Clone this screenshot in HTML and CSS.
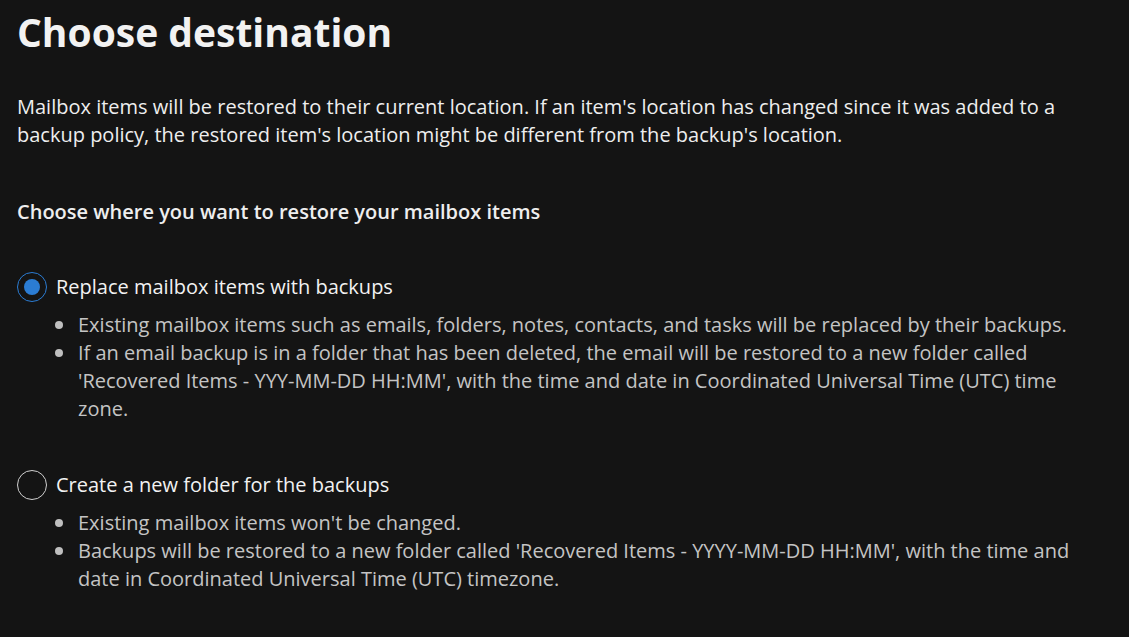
FILE: index.html
```html
<!DOCTYPE html>
<html lang="en">
<head>
<meta charset="utf-8">
<title>Choose destination</title>
<link rel="stylesheet" href="styles.css">
</head>
<body>
<main class="page">
  <h1 class="title">Choose destination</h1>
  <p class="intro">Mailbox items will be restored to their current location. If an item's location has changed since it was added to a backup policy, the restored item's location might be different from the backup's location.</p>
  <h2 class="subtitle">Choose where you want to restore your mailbox items</h2>

  <section class="option option-first">
    <label class="radio-row">
      <span class="radio radio-checked"><span class="radio-dot"></span></span>
      <span class="radio-label">Replace mailbox items with backups</span>
    </label>
    <ul class="notes">
      <li><span>Existing mailbox items such as emails, folders, notes, contacts, and tasks will be replaced by their backups.</span></li>
      <li><span>If an email backup is in a folder that has been deleted, the email will be restored to a new folder called 'Recovered Items - YYY-MM-DD HH:MM', with the time and date in Coordinated Universal Time (UTC) time zone.</span></li>
    </ul>
  </section>

  <section class="option option-second">
    <label class="radio-row">
      <span class="radio"></span>
      <span class="radio-label">Create a new folder for the backups</span>
    </label>
    <ul class="notes">
      <li><span>Existing mailbox items won't be changed.</span></li>
      <li><span>Backups will be restored to a new folder called 'Recovered Items - YYYY-MM-DD HH:MM', with the time and date in Coordinated Universal Time (UTC) timezone.</span></li>
    </ul>
  </section>
</main>
</body>
</html>
```

FILE: styles.css
```css
html, body {
  margin: 0;
  padding: 0;
  background: #141414;
}

body {
  font-family: "Open Sans", "Noto Sans", "Liberation Sans", sans-serif;
  color: #eeeeee;
  font-size: 20px;
  line-height: 28px;
}

.page {
  padding: 0 17px;
  width: 1080px;
}

.title {
  margin: 0;
  padding-top: 4px;
  font-size: 39px;
  line-height: 56px;
  font-weight: 700;
  color: #f2f2f2;
}

.intro {
  margin: 33px 0 0;
}

.subtitle {
  margin: 49px 0 0;
  font-size: 20px;
  line-height: 28px;
  font-weight: 600;
}

.option-first {
  margin-top: 46px;
}

.option-second {
  margin-top: 47px;
}

.radio-row {
  display: flex;
  align-items: center;
  gap: 9px;
}

.radio {
  box-sizing: border-box;
  width: 30px;
  height: 30px;
  border-radius: 50%;
  border: 1.5px solid #cfcfcf;
  display: flex;
  align-items: center;
  justify-content: center;
  flex: none;
}

.radio-checked {
  border-color: #2b7cd3;
}

.radio-dot {
  width: 16px;
  height: 16px;
  border-radius: 50%;
  background: #2b7cd3;
}

.radio-label {
  color: #f2f2f2;
}

.notes {
  list-style: none;
  margin: 9px 0 0;
  padding: 0 0 0 38px;
  color: #c4c4c4;
}

.notes li {
  display: grid;
  grid-template-columns: 23px 1fr;
  align-items: start;
}

.notes li::before {
  content: "";
  width: 8px;
  height: 8px;
  margin-top: 10px;
  border-radius: 50%;
  background: #bfbfbf;
}
```
